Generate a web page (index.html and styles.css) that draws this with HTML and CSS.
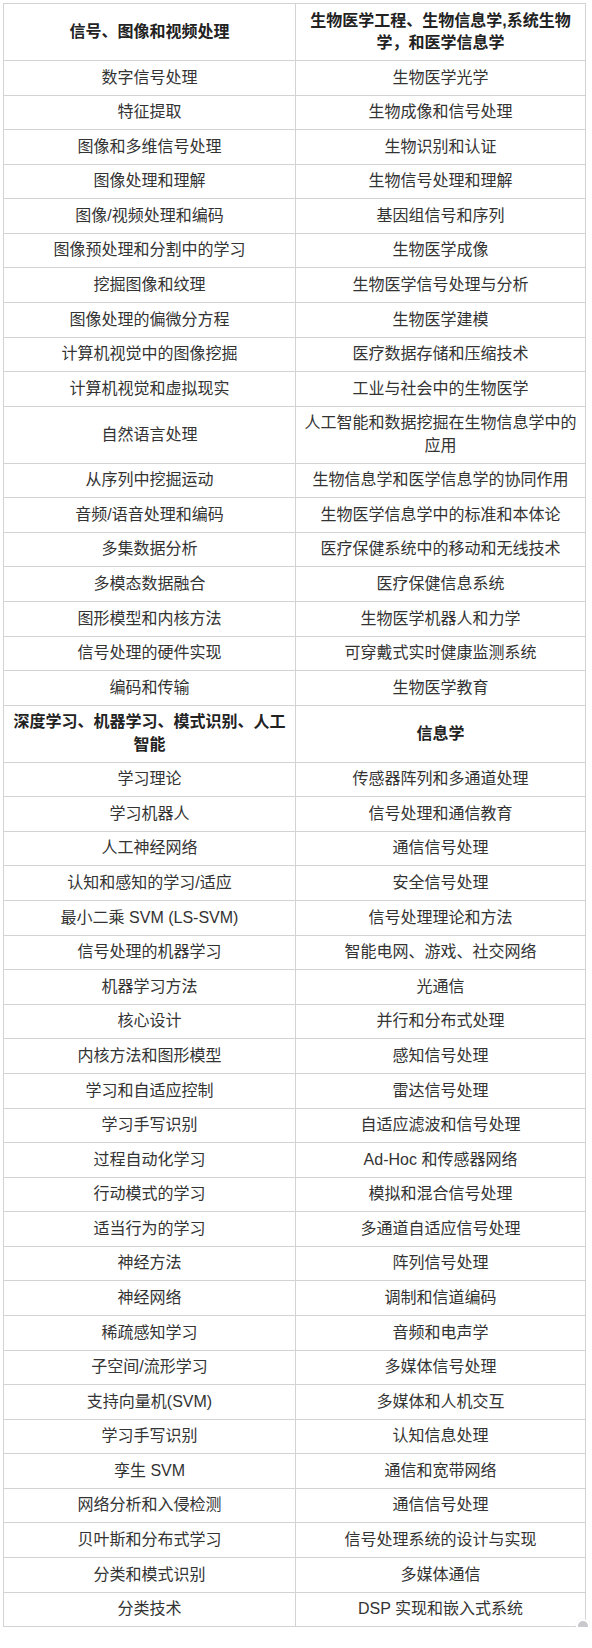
FILE: index.html
```html
<!DOCTYPE html>
<html lang="zh-CN">
<head>
<meta charset="utf-8">
<title>研究领域</title>
<link rel="stylesheet" href="styles.css">
</head>
<body>
<div class="wrap">
<table class="topics">
<colgroup><col class="c1"><col class="c2"></colgroup>
<tbody>
<tr class="head"><th>信号、图像和视频处理</th><th>生物医学工程、生物信息学,系统生物学，和医学信息学</th></tr>
<tr><td>数字信号处理</td><td>生物医学光学</td></tr>
<tr><td>特征提取</td><td>生物成像和信号处理</td></tr>
<tr><td>图像和多维信号处理</td><td>生物识别和认证</td></tr>
<tr><td>图像处理和理解</td><td>生物信号处理和理解</td></tr>
<tr><td>图像/视频处理和编码</td><td>基因组信号和序列</td></tr>
<tr><td>图像预处理和分割中的学习</td><td>生物医学成像</td></tr>
<tr><td>挖掘图像和纹理</td><td>生物医学信号处理与分析</td></tr>
<tr><td>图像处理的偏微分方程</td><td>生物医学建模</td></tr>
<tr><td>计算机视觉中的图像挖掘</td><td>医疗数据存储和压缩技术</td></tr>
<tr><td>计算机视觉和虚拟现实</td><td>工业与社会中的生物医学</td></tr>
<tr><td>自然语言处理</td><td>人工智能和数据挖掘在生物信息学中的应用</td></tr>
<tr><td>从序列中挖掘运动</td><td>生物信息学和医学信息学的协同作用</td></tr>
<tr><td>音频/语音处理和编码</td><td>生物医学信息学中的标准和本体论</td></tr>
<tr><td>多集数据分析</td><td>医疗保健系统中的移动和无线技术</td></tr>
<tr><td>多模态数据融合</td><td>医疗保健信息系统</td></tr>
<tr><td>图形模型和内核方法</td><td>生物医学机器人和力学</td></tr>
<tr><td>信号处理的硬件实现</td><td>可穿戴式实时健康监测系统</td></tr>
<tr><td>编码和传输</td><td>生物医学教育</td></tr>
<tr class="head"><th>深度学习、机器学习、模式识别、人工智能</th><th>信息学</th></tr>
<tr><td>学习理论</td><td>传感器阵列和多通道处理</td></tr>
<tr><td>学习机器人</td><td>信号处理和通信教育</td></tr>
<tr><td>人工神经网络</td><td>通信信号处理</td></tr>
<tr><td>认知和感知的学习/适应</td><td>安全信号处理</td></tr>
<tr><td>最小二乘 SVM (LS-SVM)</td><td>信号处理理论和方法</td></tr>
<tr><td>信号处理的机器学习</td><td>智能电网、游戏、社交网络</td></tr>
<tr><td>机器学习方法</td><td>光通信</td></tr>
<tr><td>核心设计</td><td>并行和分布式处理</td></tr>
<tr><td>内核方法和图形模型</td><td>感知信号处理</td></tr>
<tr><td>学习和自适应控制</td><td>雷达信号处理</td></tr>
<tr><td>学习手写识别</td><td>自适应滤波和信号处理</td></tr>
<tr><td>过程自动化学习</td><td>Ad-Hoc 和传感器网络</td></tr>
<tr><td>行动模式的学习</td><td>模拟和混合信号处理</td></tr>
<tr><td>适当行为的学习</td><td>多通道自适应信号处理</td></tr>
<tr><td>神经方法</td><td>阵列信号处理</td></tr>
<tr><td>神经网络</td><td>调制和信道编码</td></tr>
<tr><td>稀疏感知学习</td><td>音频和电声学</td></tr>
<tr><td>子空间/流形学习</td><td>多媒体信号处理</td></tr>
<tr><td>支持向量机(SVM)</td><td>多媒体和人机交互</td></tr>
<tr><td>学习手写识别</td><td>认知信息处理</td></tr>
<tr><td>孪生 SVM</td><td>通信和宽带网络</td></tr>
<tr><td>网络分析和入侵检测</td><td>通信信号处理</td></tr>
<tr><td>贝叶斯和分布式学习</td><td>信号处理系统的设计与实现</td></tr>
<tr><td>分类和模式识别</td><td>多媒体通信</td></tr>
<tr><td>分类技术</td><td>DSP 实现和嵌入式系统</td></tr>
</tbody>
</table>
<span class="handle"></span>
</div>
</body>
</html>
```

FILE: styles.css
```css
html, body {
  margin: 0;
  padding: 0;
  background: #ffffff;
}

.wrap {
  position: relative;
  width: 582px;
  padding: 3px 0 0 3px;
}

.topics {
  width: 582px;
  border-collapse: collapse;
  table-layout: fixed;
  font-family: "Liberation Sans", "Noto Sans CJK SC", sans-serif;
  font-size: 16px;
  line-height: 1.4;
  color: #333333;
}

.c1 { width: 292px; }
.c2 { width: 290px; }

.topics td,
.topics th {
  border: 1px solid #d3d3d3;
  padding: 5.6px 8px;
  text-align: center;
  vertical-align: middle;
}

.topics th {
  font-weight: bold;
  color: #222222;
}

.handle {
  position: absolute;
  left: 578px;
  top: 1621px;
  width: 10px;
  height: 10px;
  border-radius: 50%;
  background: #c9c9cd;
  box-shadow: 0 0 0 2px #ffffff, 0 0 3px 2px rgba(0, 0, 0, 0.06);
}
```
